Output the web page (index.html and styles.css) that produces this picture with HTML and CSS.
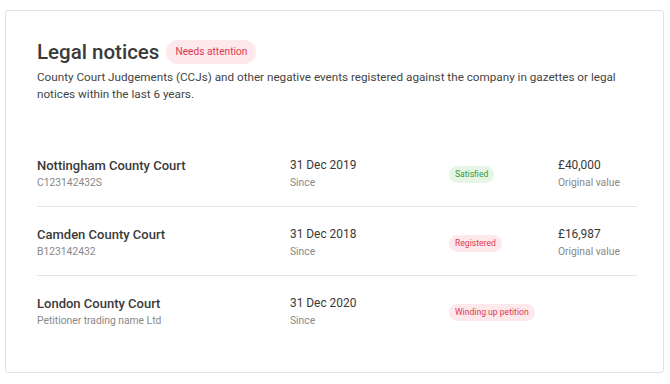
FILE: index.html
```html
<!DOCTYPE html>
<html lang="en">

<head>
    <meta charset="UTF-8">
    <title>Legal notices</title>
    <link rel="stylesheet" href="styles.css">
</head>

<body>
    <div class="card">
        <div class="header">
            <h1>Legal notices</h1>
            <span class="tag tag-red tag-lg">Needs attention</span>
        </div>
        <p class="intro">County Court Judgements (CCJs) and other negative events registered against the company in gazettes or legal notices within the last 6 years.</p>

        <div class="notices">
            <div class="notice">
                <div class="cell">
                    <div class="name">Nottingham County Court</div>
                    <div class="sub">C123142432S</div>
                </div>
                <div class="cell">
                    <div class="value">31 Dec 2019</div>
                    <div class="sub">Since</div>
                </div>
                <div class="status">
                    <span class="tag tag-green">Satisfied</span>
                </div>
                <div class="cell">
                    <div class="value">£40,000</div>
                    <div class="sub">Original value</div>
                </div>
            </div>

            <div class="notice">
                <div class="cell">
                    <div class="name">Camden County Court</div>
                    <div class="sub">B123142432</div>
                </div>
                <div class="cell">
                    <div class="value">31 Dec 2018</div>
                    <div class="sub">Since</div>
                </div>
                <div class="status">
                    <span class="tag tag-red">Registered</span>
                </div>
                <div class="cell">
                    <div class="value">£16,987</div>
                    <div class="sub">Original value</div>
                </div>
            </div>

            <div class="notice">
                <div class="cell">
                    <div class="name">London County Court</div>
                    <div class="sub">Petitioner trading name Ltd</div>
                </div>
                <div class="cell">
                    <div class="value">31 Dec 2020</div>
                    <div class="sub">Since</div>
                </div>
                <div class="status">
                    <span class="tag tag-red">Winding up petition</span>
                </div>
                <div class="cell"></div>
            </div>
        </div>
    </div>
</body>

</html>
```

FILE: styles.css
```css
body {
    margin: 0;
    padding: 10px 6px 0 5px;
    background: #fff;
    font-family: Roboto, "Liberation Sans", Arial, sans-serif;
    color: #333;
}

.card {
    border: 1px solid #e2e2e2;
    border-radius: 3px;
    box-sizing: border-box;
    height: 363px;
    padding: 28px 26px 0 31px;
}

.header {
    display: flex;
    align-items: center;
    gap: 7px;
}

h1 {
    margin: 0;
    font-size: 20.5px;
    font-weight: 500;
    color: #3a3a3a;
    line-height: 26px;
}

.intro {
    margin: 4px 0 0;
    font-size: 11.7px;
    line-height: 17px;
    color: #444;
}

.notices {
    margin-top: 35px;
}

.notice {
    display: grid;
    grid-template-columns: 253px 159px 109px 1fr;
    align-items: center;
    height: 68px;
    border-bottom: 1px solid #e6e6e6;
}

.notice:last-child {
    border-bottom: none;
}

.cell {
    padding-top: 4px;
}

.name {
    font-size: 13px;
    font-weight: 500;
    color: #3a3a3a;
    line-height: 17px;
}

.value {
    font-size: 11.9px;
    color: #3a3a3a;
    line-height: 17px;
}

.sub {
    font-size: 10.3px;
    color: #888;
    line-height: 16px;
    margin-top: 1px;
}

.tag {
    display: inline-block;
    font-size: 8.6px;
    line-height: 17px;
    padding: 0 6px;
    border-radius: 9px;
}

.tag-lg {
    font-size: 10.2px;
    line-height: 24px;
    padding: 0 9px;
    border-radius: 12px;
}

.tag-red {
    background: #fde8eb;
    color: #e03a52;
}

.tag-green {
    background: #e7f5e6;
    color: #2f9b45;
}
```
